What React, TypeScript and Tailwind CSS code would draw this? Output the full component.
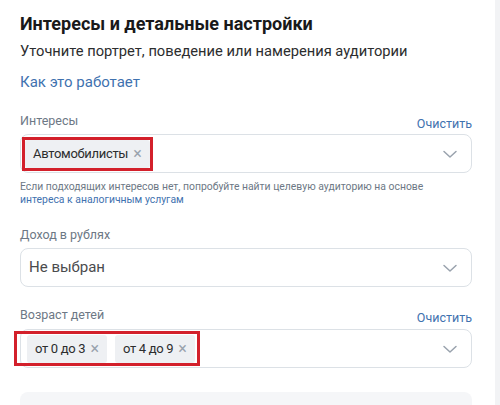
import React from "react";

const Chevron = () => (
  <svg width="16" height="10" viewBox="0 0 16 10" fill="none" className="shrink-0">
    <path d="M2 2.5 L8 8 L14 2.5" stroke="#99a2ad" strokeWidth="1.5" strokeLinecap="round" strokeLinejoin="round" />
  </svg>
);

const Chip = ({ label }: { label: string }) => (
  <div className="flex items-center h-[28px] bg-[#eef0f3] rounded-[3px] pl-[8px] pr-[8px] gap-[5px]">
    <span className="text-[13px] text-[#2c2d2e] tracking-[-0.3px]">{label}</span>
    <span className="text-[16px] leading-none text-[#99a2ad]">×</span>
  </div>
);

export default function App() {
  return (
    <div
      className="w-[500px] h-[405px] overflow-hidden bg-white flex"
      style={{ fontFamily: "Roboto, 'Noto Sans', sans-serif" }}
    >
      <div className="flex-1 pl-[20px] pr-[23px] pt-[11px]">
        <h1 className="text-[18px] font-bold text-[#19191a] leading-[26px]">
          Интересы и детальные настройки
        </h1>
        <p className="mt-[4px] text-[14.7px] leading-[20px] text-[#2c2d2e]">
          Уточните портрет, поведение или намерения аудитории
        </p>
        <p className="mt-[11px] text-[15px] leading-[20px] text-[#3f72af]">Как это работает</p>

        <div className="mt-[21px] flex items-end justify-between">
          <span className="text-[12.5px] leading-[16px] text-[#6d7885]">Интересы</span>
          <span className="text-[12.5px] leading-[16px] text-[#3f72af] mb-[-3px]">Очистить</span>
        </div>
        <div className="mt-[5px] h-[39px] border border-[#dce1e6] rounded-[8px] flex items-center pl-[1px] pr-[13px] justify-between">
          <div className="border-[3px] border-[#d3202b] h-[34px] flex items-center">
            <Chip label="Автомобилисты" />
          </div>
          <Chevron />
        </div>
        <p className="mt-[7px] text-[10.4px] leading-[13px] text-[#6d7885]">
          Если подходящих интересов нет, попробуйте найти целевую аудиторию на основе
          <br />
          <span className="text-[#3f72af]">интереса к аналогичным услугам</span>
        </p>

        <div className="mt-[21px] text-[12.5px] leading-[16px] text-[#6d7885]">Доход в рублях</div>
        <div className="mt-[5px] h-[39px] border border-[#dce1e6] rounded-[8px] flex items-center pl-[8px] pr-[13px] justify-between">
          <span className="text-[15px] text-[#4a4b4d]">Не выбран</span>
          <Chevron />
        </div>

        <div className="mt-[20px] flex items-end justify-between">
          <span className="text-[12.5px] leading-[16px] text-[#6d7885]">Возраст детей</span>
          <span className="text-[12.5px] leading-[16px] text-[#3f72af] mb-[-3px]">Очистить</span>
        </div>
        <div className="mt-[6px] h-[39px] border border-[#dce1e6] rounded-[8px] flex items-center pr-[13px] justify-between">
          <div className="ml-[-7px] border-[3px] border-[#d3202b] h-[35px] flex items-center gap-[8px] pl-[10px] pr-[2px]">
            <Chip label="от 0 до 3" />
            <Chip label="от 4 до 9" />
          </div>
          <Chevron />
        </div>

        <div className="mt-[24px] h-[40px] rounded-[8px] bg-[#f5f6f8]" />
      </div>
      <div className="w-[5px] bg-[#f2f3f5]" />
    </div>
  );
}
